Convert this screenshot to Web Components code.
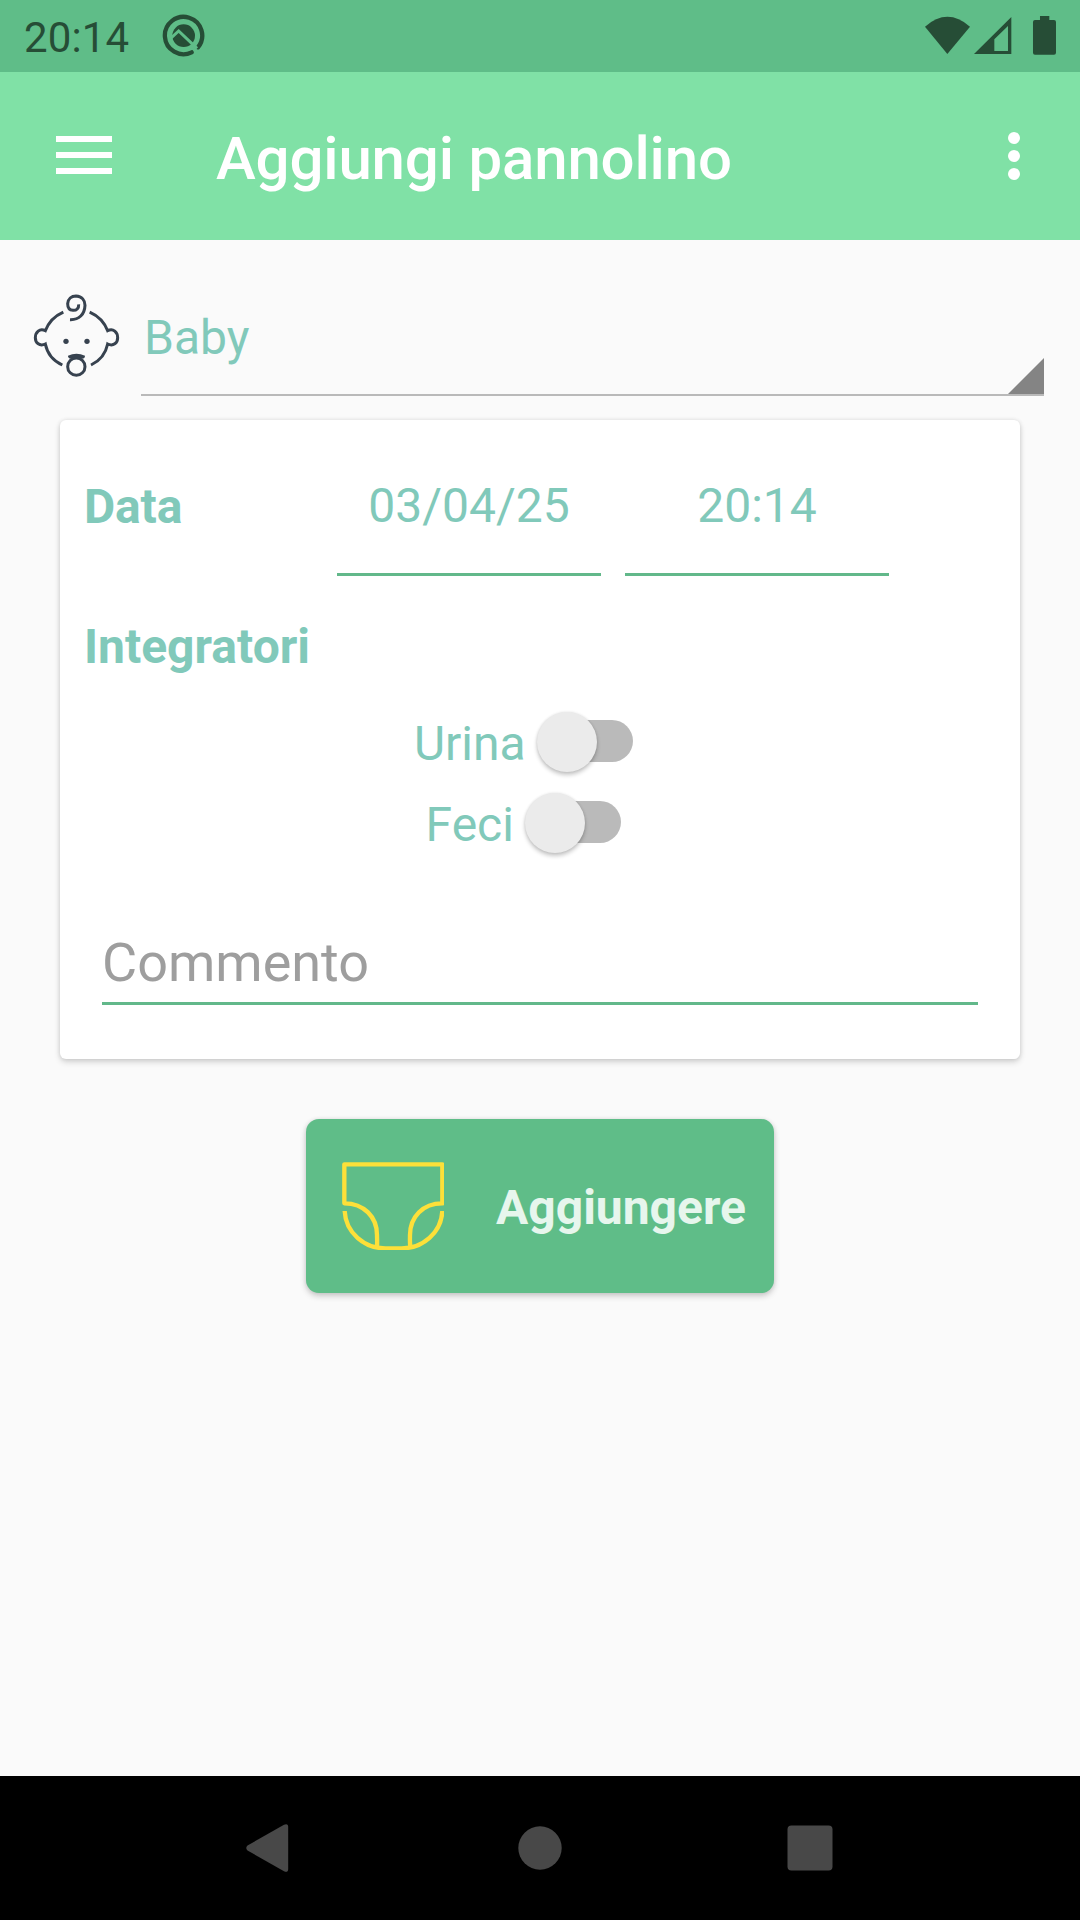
<!DOCTYPE html>
<html lang="it">
<head>
<meta charset="utf-8">
<title>Aggiungi pannolino</title>
<style>
	html, body {
		margin: 0;
		height: 100%;
	}

	body {
		font-family: Roboto, "Liberation Sans", sans-serif;
		font-size: 48px;
		line-height: 57px;
		color: #81c9ba;
		background: #fafafa;
		overflow: hidden;
	}
</style>
</head>
<body>

<diaper-app>
	<status-bar slot="top">20:14</status-bar>
	<app-bar slot="top">Aggiungi pannolino</app-bar>
	<child-spinner>Baby</child-spinner>
	<form-card>
		<date-row>
			<span slot="label">Data</span>
			<span slot="date">03/04/25</span>
			<span slot="time">20:14</span>
		</date-row>
		<section-title>Integratori</section-title>
		<toggle-switch>Urina</toggle-switch>
		<toggle-switch>Feci</toggle-switch>
		<comment-field>Commento</comment-field>
	</form-card>
	<add-button>Aggiungere</add-button>
	<nav-bar slot="bottom"></nav-bar>
</diaper-app>

<script>
class BaseElement extends HTMLElement {

	constructor() {

		super();

		this.attachShadow({ mode: 'open' });
		this.shadowRoot.innerHTML = this.render();

	}

	render() { return '<slot></slot>'; }

}

class DiaperApp extends BaseElement {

	render() {

		return `
			<style>
				:host {
					display: flex;
					flex-direction: column;
					width: 1080px;
					height: 1920px;
				}

				main {
					flex: 1;
					display: flex;
					flex-direction: column;
					align-items: center;
				}
			</style>
			<slot name="top"></slot>
			<main><slot></slot></main>
			<slot name="bottom"></slot>
		`;

	}

}

class StatusBar extends BaseElement {

	render() {

		return `
			<style>
				:host {
					display: flex;
					align-items: center;
					box-sizing: border-box;
					height: 72px;
					padding: 0 23.3px 0 24px;
					font-size: 42px;
					letter-spacing: 0.15px;
					color: #264d36;
					background: #5fbd88;
				}

				.time {
					width: 138.3px;
					padding-top: 3px;
				}

				.system {
					margin: 0 0 2px auto;
				}
			</style>
			<div class="time"><slot></slot></div>
			<svg width="43.33" height="43.33" viewBox="487 43 130 130" fill="none">
				<path d="M576 158A56 56 0 1 1 595 143" stroke="currentColor" stroke-width="13" stroke-linecap="round"/>
				<circle cx="552" cy="108" r="34" fill="currentColor"/>
				<path d="M512 117L537 94L592 146" stroke="#5fbd88" stroke-width="9"/>
			</svg>
			<svg class="system" width="131.67" height="40" viewBox="135 45 395 120" fill="currentColor">
				<path d="M135 80Q202 21 270 80L202 162Z"/>
				<path fill-rule="evenodd" d="M282 162L394 51V162ZM343 118V153H384V78Z"/>
				<path d="M480 48H508V60H522Q528 60 528 66V158Q528 164 522 164H465Q459 164 459 158V66Q459 60 465 60H480Z"/>
			</svg>
		`;

	}

}

class AppBar extends BaseElement {

	render() {

		return `
			<style>
				:host {
					display: flex;
					align-items: center;
					box-sizing: border-box;
					height: 168px;
					padding: 0 60px 0 56px;
					font-size: 60px;
					font-weight: 500;
					line-height: 70px;
					letter-spacing: -0.18px;
					color: #fff;
					background: #80e1a6;
				}

				.menu, .more {
					display: flex;
					flex-direction: column;
				}

				.menu {
					gap: 10px;
					width: 56px;
					margin: 0 104px 2px 0;
				}

				.menu i {
					height: 6px;
					background: #fff;
				}

				.title {
					flex: 1;
					padding-top: 5px;
				}

				.more {
					gap: 6px;
				}

				.more i {
					width: 12px;
					height: 12px;
					border-radius: 50%;
					background: #fff;
				}
			</style>
			<div class="menu"><i></i><i></i><i></i></div>
			<div class="title"><slot></slot></div>
			<div class="more"><i></i><i></i><i></i></div>
		`;

	}

}

class ChildSpinner extends BaseElement {

	render() {

		return `
			<style>
				:host {
					display: flex;
					box-sizing: border-box;
					width: 100%;
					height: 156px;
					margin-bottom: 24px;
					padding: 0 36px 0 30px;
				}

				svg {
					margin-top: 50px;
				}

				.select {
					flex: 1;
					display: flex;
					justify-content: space-between;
					align-items: flex-end;
					margin-left: 17.7px;
					border-bottom: 2px solid #b9b9b9;
				}

				.value {
					align-self: flex-start;
					padding: 69px 0 0 3px;
				}

				.arrow {
					width: 36px;
					height: 36px;
					background: #848484;
					clip-path: polygon(100% 0, 100% 100%, 0 100%);
				}
			</style>
			<svg width="93.33" height="90" viewBox="90 60 280 270" fill="none" stroke="#37424f" stroke-width="9">
				<path d="M190 126Q151 143 136 182C119 173 106 187 106 203C106 219 119 230 136 222Q145 266 187 285"/>
				<path d="M269 126Q308 143 323 182C340 173 353 187 353 203C353 219 340 230 323 222Q314 266 273 285"/>
				<path d="M236 103C237 115 229 122 219 121C208 120 203 111 203 101C204 87 214 78 228 78C246 79 255 91 255 106C254 133 237 150 210 149"/>
				<circle cx="229" cy="290" r="26"/>
				<g fill="#37424f" stroke="none">
					<circle cx="198" cy="214" r="8"/>
					<circle cx="261" cy="214" r="8"/>
					<path d="M204 257Q229 245 255 257Q255 266 246 266H212Q204 265 204 257Z"/>
				</g>
			</svg>
			<div class="select">
				<div class="value"><slot></slot></div>
				<div class="arrow"></div>
			</div>
		`;

	}

}

class FormCard extends BaseElement {

	render() {

		return `
			<style>
				:host {
					display: flex;
					flex-direction: column;
					box-sizing: border-box;
					width: 960px;
					height: 639px;
					padding: 0 24px;
					border-radius: 6px;
					background: #fff;
					box-shadow: 0 3px 6px rgba(0,0,0,0.16), 0 0 4px rgba(0,0,0,0.1);
				}
			</style>
			<slot></slot>
		`;

	}

}

class DateRow extends BaseElement {

	render() {

		return `
			<style>
				:host {
					display: flex;
					gap: 24px;
					height: 156px;
				}

				.label {
					width: 229px;
					padding-top: 58px;
					font-weight: 700;
					letter-spacing: -0.15px;
				}

				.field {
					box-sizing: border-box;
					width: 264px;
					padding-top: 57px;
					text-align: center;
					border-bottom: 3px solid #62b88a;
				}
			</style>
			<div class="label"><slot name="label"></slot></div>
			<div class="field"><slot name="date"></slot></div>
			<div class="field"><slot name="time"></slot></div>
		`;

	}

}

class SectionTitle extends BaseElement {

	render() {

		return `
			<style>
				:host {
					display: block;
					margin: 42px 0 36px;
					font-weight: 700;
				}
			</style>
			<slot></slot>
		`;

	}

}

class ToggleSwitch extends BaseElement {

	render() {

		return `
			<style>
				:host {
					display: flex;
					justify-content: center;
					align-items: center;
					gap: 11px;
					height: 60px;
					margin-bottom: 21px;
					padding-right: 33.5px;
				}

				.text {
					padding-top: 5px;
				}

				.track {
					display: flex;
					align-items: center;
					width: 87px;
					height: 42px;
					margin-left: 9px;
					border-radius: 21px;
					background: #bababa;
				}

				.thumb {
					width: 60px;
					height: 60px;
					margin: 2px 0 0 -9px;
					border-radius: 50%;
					background: #ebebeb;
					box-shadow: 0 3px 4px rgba(0,0,0,0.22), 0 0 3px rgba(0,0,0,0.1);
				}
			</style>
			<div class="text"><slot></slot></div>
			<div class="track"><div class="thumb"></div></div>
		`;

	}

}

class CommentField extends BaseElement {

	render() {

		return `
			<style>
				:host {
					display: block;
					margin: 58px 18px 0;
					padding-bottom: 8px;
					font-size: 54px;
					line-height: 63px;
					color: #9e9e9e;
					border-bottom: 3px solid #62b88a;
				}
			</style>
			<slot></slot>
		`;

	}

}

class AddButton extends BaseElement {

	render() {

		return `
			<style>
				:host {
					display: flex;
					align-items: center;
					box-sizing: border-box;
					width: 468px;
					height: 174px;
					margin-top: 60px;
					padding-left: 35.7px;
					border-radius: 13px;
					font-weight: 700;
					color: #e7f6ed;
					background: #5fbd88;
					box-shadow: 0 3px 6px rgba(0,0,0,0.2), 0 0 4px rgba(0,0,0,0.08);
				}

				.text {
					padding: 3px 0 0 51.7px;
				}
			</style>
			<svg width="102.67" height="88.67" viewBox="155 185 308 266" fill="none" stroke="#fde039" stroke-width="13">
				<path stroke-linejoin="round" d="M260 440C261 425 260 415 260 404C260 350 221 309 162 309V192H456V309C397 309 359 350 359 404C359 415 358 425 360 440"/>
				<path d="M163 332C166 397 222 444 285 444H334C397 444 453 397 456 332"/>
			</svg>
			<div class="text"><slot></slot></div>
		`;

	}

}

class NavBar extends BaseElement {

	render() {

		return `
			<style>
				:host {
					display: flex;
					justify-content: center;
					align-items: center;
					gap: 222px;
					height: 144px;
					background: #000;
				}
			</style>
			<svg width="48" height="50" viewBox="0 0 48 50" fill="#484848">
				<path d="M1.5 22.5L38 1.7Q42.2 0 42.2 4V46Q42.2 50 38 48.3L1.5 27.5Q-1 25 1.5 22.5Z"/>
			</svg>
			<svg width="48" height="48" viewBox="0 0 48 48" fill="#484848">
				<circle cx="24" cy="24" r="21.7"/>
			</svg>
			<svg width="48" height="48" viewBox="0 0 48 48" fill="#484848">
				<rect x="1.5" y="1.5" width="45" height="45" rx="4"/>
			</svg>
		`;

	}

}

customElements.define('diaper-app', DiaperApp);
customElements.define('status-bar', StatusBar);
customElements.define('app-bar', AppBar);
customElements.define('child-spinner', ChildSpinner);
customElements.define('form-card', FormCard);
customElements.define('date-row', DateRow);
customElements.define('section-title', SectionTitle);
customElements.define('toggle-switch', ToggleSwitch);
customElements.define('comment-field', CommentField);
customElements.define('add-button', AddButton);
customElements.define('nav-bar', NavBar);
</script>
</body>
</html>
